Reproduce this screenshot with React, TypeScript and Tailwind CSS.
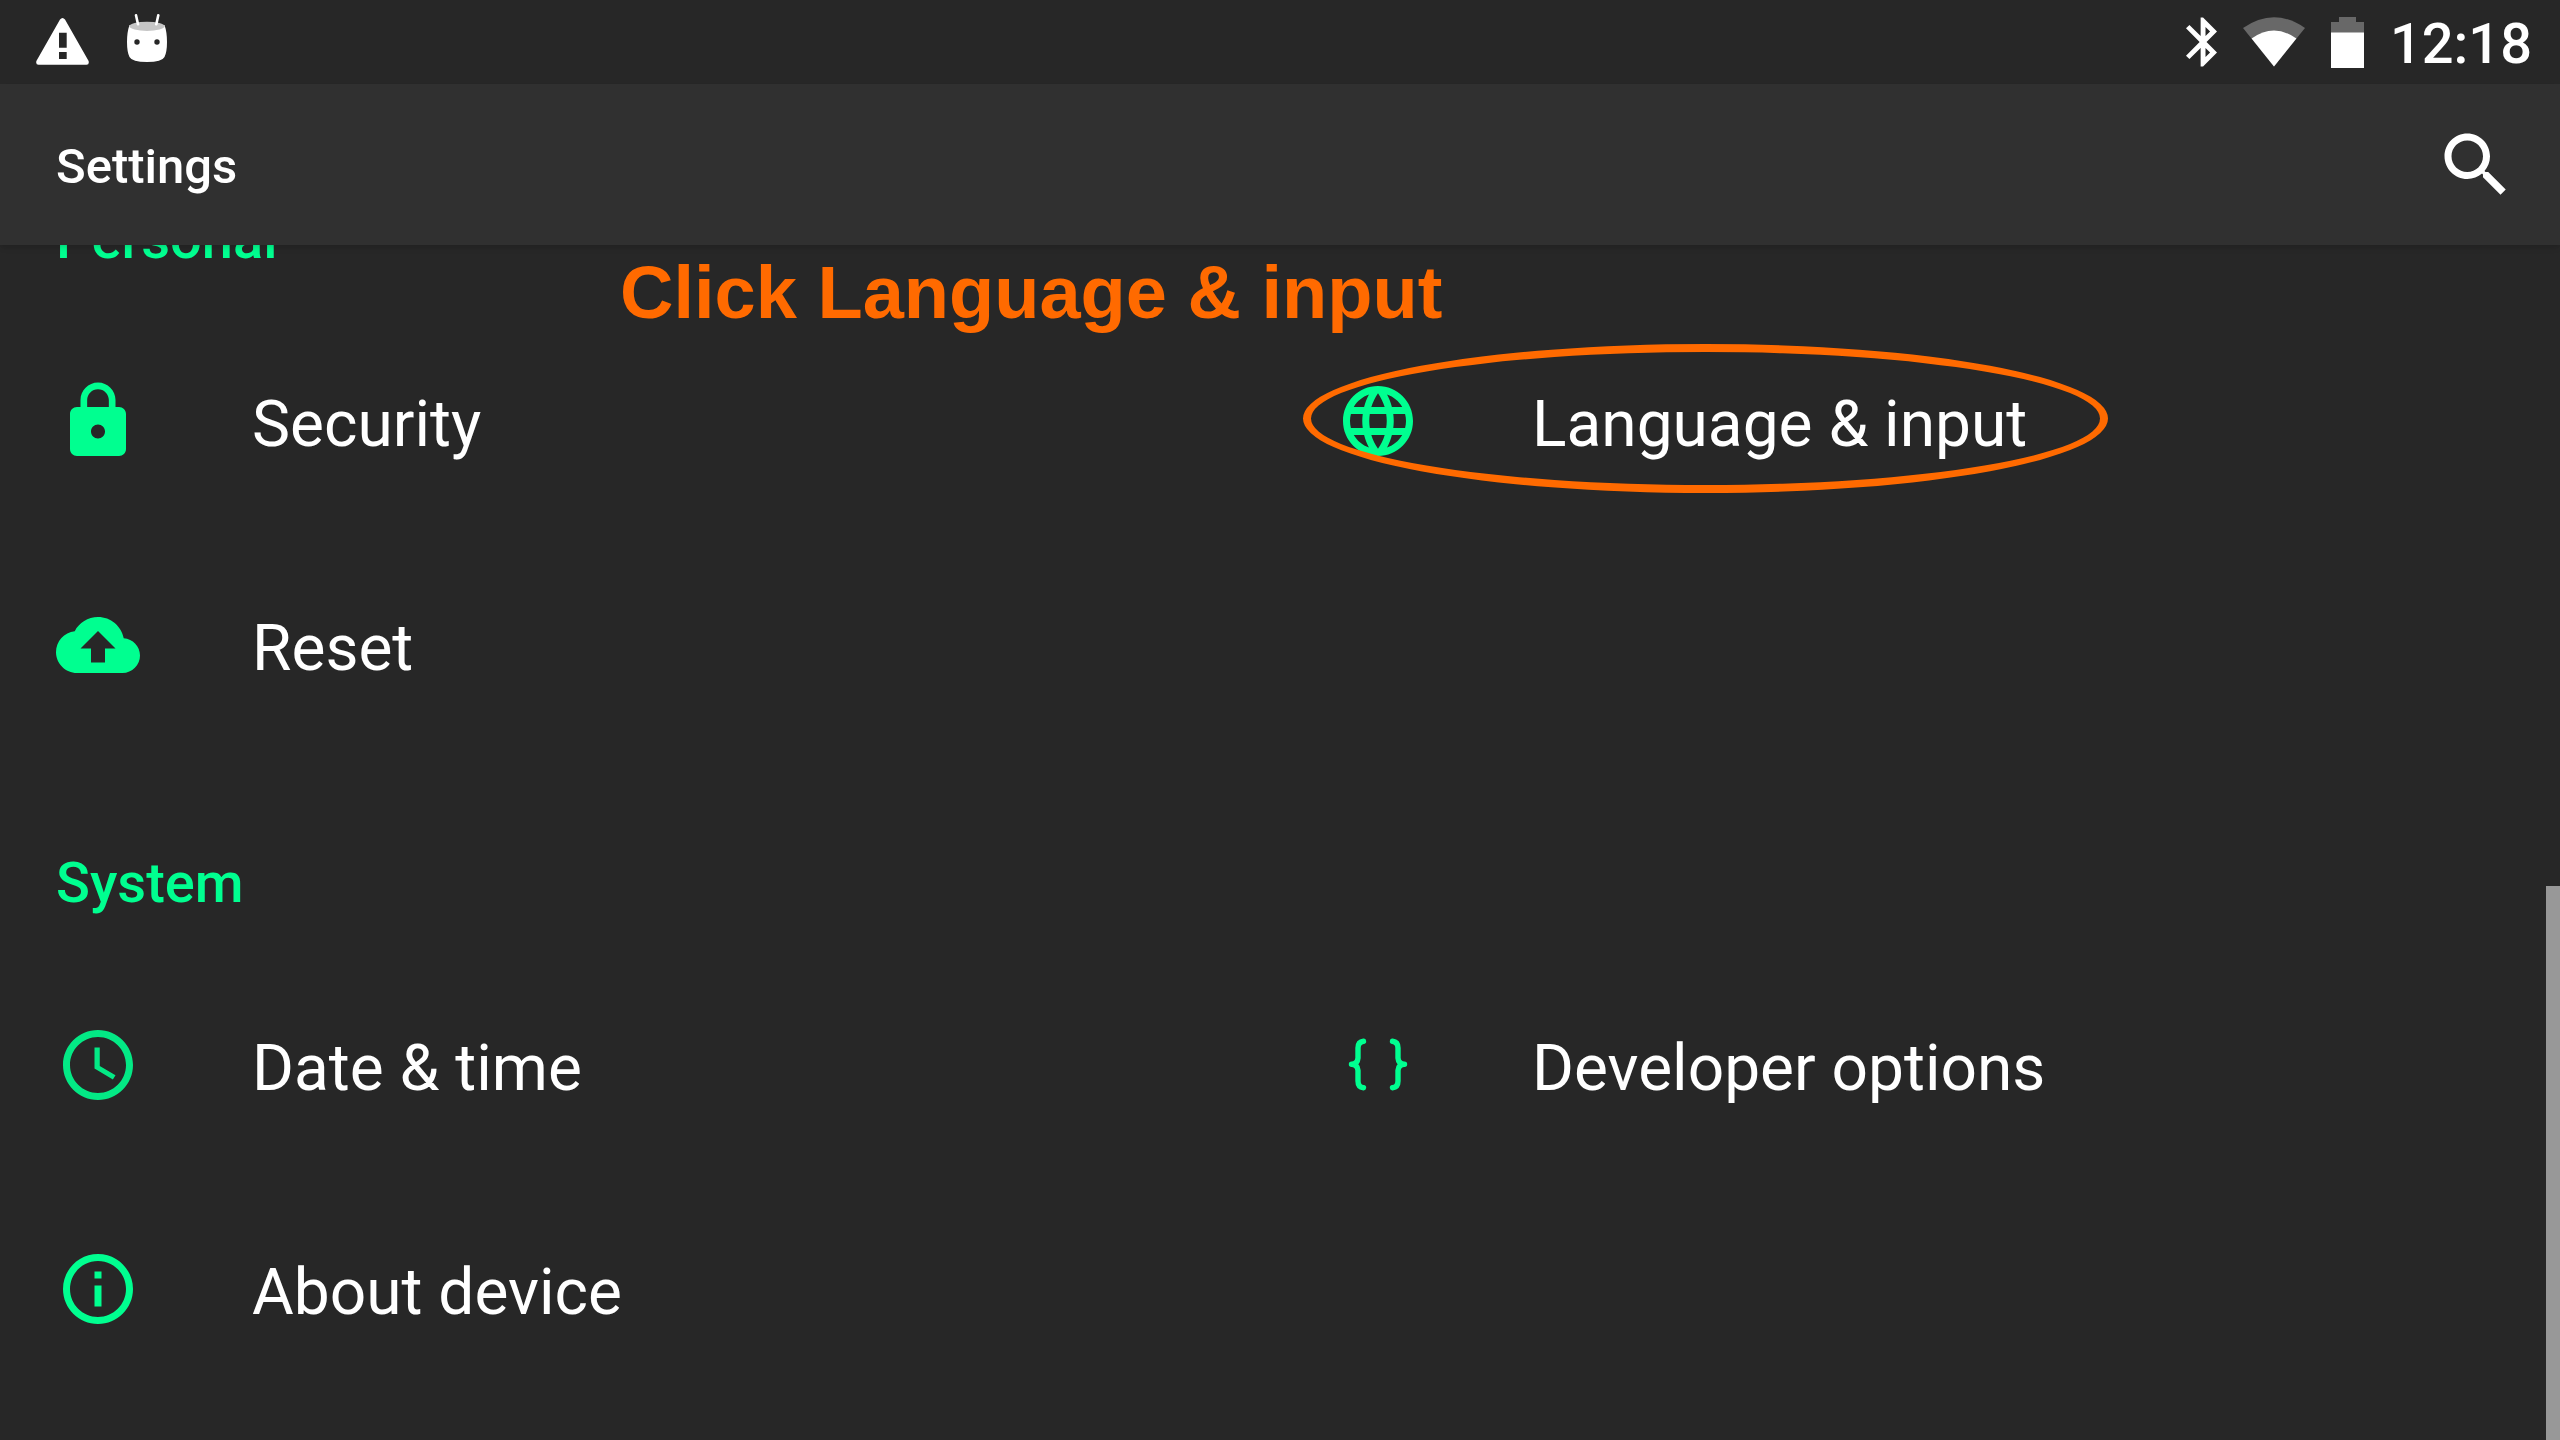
import type { ReactNode } from "react";

function Glyph({ d, className = "" }: { d: string; className?: string }) {
  return (
    <svg viewBox="0 0 24 24" aria-hidden="true" className={`size-[84px] shrink-0 fill-current ${className}`}>
      <path d={d} />
    </svg>
  );
}

const LOCK =
  "M18 8h-1V6c0-2.76-2.24-5-5-5S7 3.24 7 6v2H6c-1.1 0-2 .9-2 2v10c0 1.1.9 2 2 2h12c1.1 0 2-.9 2-2V10c0-1.1-.9-2-2-2zm-6 9c-1.1 0-2-.9-2-2s.9-2 2-2 2 .9 2 2-.9 2-2 2zm3.1-9H8.9V6c0-1.71 1.39-3.1 3.1-3.1 1.71 0 3.1 1.39 3.1 3.1v2z";
const CLOUD =
  "M19.35 10.04C18.67 6.59 15.64 4 12 4 9.11 4 6.6 5.64 5.35 8.04 2.34 8.36 0 10.91 0 14c0 3.31 2.69 6 6 6h13c2.76 0 5-2.24 5-5 0-2.64-2.05-4.78-4.65-4.96zM14 13v4h-4v-4H7l5-5 5 5h-3z";
const GLOBE =
  "M11.99 2C6.47 2 2 6.48 2 12s4.47 10 9.99 10C17.52 22 22 17.52 22 12S17.52 2 11.99 2zm6.93 6h-2.95c-.32-1.25-.78-2.45-1.38-3.56 1.84.63 3.37 1.91 4.33 3.56zM12 4.04c.83 1.2 1.48 2.53 1.91 3.96h-3.82c.43-1.43 1.08-2.76 1.91-3.96zM4.26 14C4.1 13.36 4 12.69 4 12s.1-1.36.26-2h3.38c-.08.66-.14 1.32-.14 2s.06 1.34.14 2H4.26zm.82 2h2.95c.32 1.25.78 2.45 1.38 3.56-1.84-.63-3.37-1.9-4.33-3.56zm2.95-8H5.08c.96-1.66 2.49-2.93 4.33-3.56C8.81 5.55 8.35 6.75 8.03 8zM12 19.96c-.83-1.2-1.48-2.53-1.91-3.96h3.82c-.43 1.43-1.08 2.76-1.91 3.96zM14.34 14H9.66c-.09-.66-.16-1.32-.16-2s.07-1.35.16-2h4.68c.09.65.16 1.32.16 2s-.07 1.34-.16 2zm.25 5.56c.6-1.11 1.06-2.31 1.38-3.56h2.95c-.96 1.65-2.49 2.93-4.33 3.56zM16.36 14c.08-.66.14-1.32.14-2s-.06-1.34-.14-2h3.38c.16.64.26 1.31.26 2s-.1 1.36-.26 2h-3.38z";
const CLOCK =
  "M11.99 2C6.47 2 2 6.48 2 12s4.47 10 9.99 10C17.52 22 22 17.52 22 12S17.52 2 11.99 2zM12 20c-4.42 0-8-3.58-8-8s3.58-8 8-8 8 3.58 8 8-3.58 8-8 8zM12.5 7H11v6l5.25 3.15.75-1.23-4.5-2.67z";
const INFO =
  "M11 17h2v-6h-2v6zm1-15C6.48 2 2 6.48 2 12s4.48 10 10 10 10-4.48 10-10S17.52 2 12 2zm0 18c-4.41 0-8-3.59-8-8s3.59-8 8-8 8 3.59 8 8-3.59 8-8 8zM11 9h2V7h-2v2z";
const SEARCH =
  "M15.5 14h-.79l-.28-.27C15.41 12.59 16 11.11 16 9.5 16 5.91 13.09 3 9.5 3S3 5.91 3 9.5 5.91 16 9.5 16c1.61 0 3.09-.59 4.23-1.57l.27.28v.79l5 4.99L20.49 19l-4.99-5zm-6 0C7.01 14 5 11.99 5 9.5S7.01 5 9.5 5 14 7.01 14 9.5 11.99 14 9.5 14z";

function Braces() {
  return (
    <svg
      viewBox="0 0 84 84"
      aria-hidden="true"
      className="size-[84px] shrink-0 fill-none stroke-current"
      strokeWidth="5.4"
      strokeLinecap="round"
      strokeLinejoin="round"
    >
      <path d="M27.500 18.200Q22 18.800 22 25V35Q21.500 41.300 15.500 41.300Q21.500 41.300 22 47.500V58Q22 64.200 27.500 64.800" />
      <path d="M56.500 18.200Q62 18.800 62 25V35Q62.500 41.300 68.500 41.300Q62.500 41.300 62 47.500V58Q62 64.200 56.500 64.800" />
    </svg>
  );
}

function StatusBar() {
  return (
    <header className="flex h-[84px] shrink-0 items-center justify-between pl-9 pr-7">
      <div className="flex items-center gap-9">
        <svg viewBox="0 0 54 48" className="h-12 w-[54px]" role="img" aria-label="Warning">
          <path
            fill="#fff"
            fillRule="evenodd"
            d="M24 1.500Q26.500 -1.500 29 1.500L52.600 43Q53.500 46.700 50.500 46.700H2.500Q-.5 46.700 .4 43ZM23 14.700v15h7.700v-15ZM23 34v7h7.700v-7Z"
          />
        </svg>
        <svg viewBox="0 0 42 56" className="h-14 w-[42px]" role="img" aria-label="Android">
          <path fill="#fff" d="M3.500 11Q21 18 38.500 11Q41 18 41 28Q41 38 38.500 43Q36 48 21 48Q6 48 3.500 43Q1 38 1 28Q1 18 3.500 11Z" />
          <ellipse cx="21" cy="12.300" rx="17.500" ry="4.600" fill="#c6c6c6" />
          <path stroke="#fff" strokeWidth="2.600" strokeLinecap="round" d="M10 1.300l2 9M32.300 1.300l-2 9" />
          <circle cx="11" cy="28" r="2.700" fill="#272727" />
          <circle cx="31" cy="28" r="2.700" fill="#272727" />
        </svg>
      </div>
      <div className="flex items-center">
        <svg viewBox="5 2 12.71 20" className="mr-[26px] h-[50px] w-[31px]" role="img" aria-label="Bluetooth">
          <path
            fill="#fff"
            d="M17.71 7.71L12 2h-1v7.59L6.41 5 5 6.41 10.59 12 5 17.59 6.41 19 11 14.41V22h1l5.71-5.71-4.3-4.29 4.3-4.29zM13 5.83l1.88 1.88L13 9.59V5.83zm1.88 10.46L13 18.17v-3.76l1.88 1.88z"
          />
        </svg>
        <svg viewBox="0 0 62 50" className="mr-[26px] h-[50px] w-[62px]" role="img" aria-label="Wi-Fi">
          <path fill="#686868" d="M0 11Q31 -10.500 62 11L31 49.500Z" />
          <path fill="#fff" d="M8.600 21.500Q31 5.500 53.400 21.500L31 49.500Z" />
        </svg>
        <svg viewBox="0 0 33 51" className="mr-[26px] h-[51px] w-[33px]" role="img" aria-label="Battery">
          <path fill="#686868" d="M8 0h17v5h8v11H0V5h8z" />
          <path fill="#fff" d="M0 15.500h33V51H0z" />
        </svg>
        <time className="pt-1 text-[56px] font-medium leading-[66px]">12:18</time>
      </div>
    </header>
  );
}

function Category({ children }: { children: ReactNode }) {
  return <h2 className="flex h-[196px] items-end px-14 pb-[37px] text-[56px] font-medium leading-[66px] text-[#00ff90]">{children}</h2>;
}

function Item({ icon, label, marked = false }: { icon: ReactNode; label: string; marked?: boolean }) {
  return (
    <li className="relative">
      <button type="button" className="flex h-56 w-full items-center gap-28 px-14 text-left">
        <span className="text-[#00ff90]">{icon}</span>
        <span className="pt-2 text-[64px] leading-[76px]">{label}</span>
      </button>
      {marked && (
        <span className="pointer-events-none absolute left-[23px] top-[35px] h-[149px] w-[805px] rounded-[50%] border-8 border-[#ff6a00]" />
      )}
    </li>
  );
}

export default function App() {
  return (
    <div className="flex h-screen flex-col overflow-hidden bg-[#272727] font-['Roboto',sans-serif] text-white">
      <StatusBar />
      <div className="z-10 flex h-[161px] shrink-0 items-center justify-between bg-[#303030] pl-14 pr-[42px] shadow-md">
        <h1 className="pt-1 text-[49px] font-medium leading-[58px]">Settings</h1>
        <button type="button" aria-label="Search">
          <Glyph d={SEARCH} />
        </button>
      </div>
      <main className="relative flex min-h-0 flex-1 flex-col justify-end overflow-hidden">
        <div className="mb-[39px]">
          <section>
            <Category>Personal</Category>
            <ul className="grid grid-cols-2">
              <Item icon={<Glyph d={LOCK} />} label="Security" />
              <Item icon={<Glyph d={GLOBE} />} label="Language & input" marked />
              <Item icon={<Glyph d={CLOUD} />} label="Reset" />
            </ul>
          </section>
          <section>
            <Category>System</Category>
            <ul className="grid grid-cols-2">
              <Item icon={<Glyph d={CLOCK} className="opacity-90" />} label="Date & time" />
              <Item icon={<Braces />} label="Developer options" />
              <Item icon={<Glyph d={INFO} />} label="About device" />
            </ul>
          </section>
        </div>
        <p className="absolute left-[620px] top-[6px] font-['Liberation_Sans',sans-serif] text-[74px] font-bold leading-[84px] text-[#ff6a00]">
          Click Language &amp; input
        </p>
        <div className="absolute bottom-0 right-0 h-[554px] w-3.5 bg-[#989898]" />
      </main>
    </div>
  );
}
